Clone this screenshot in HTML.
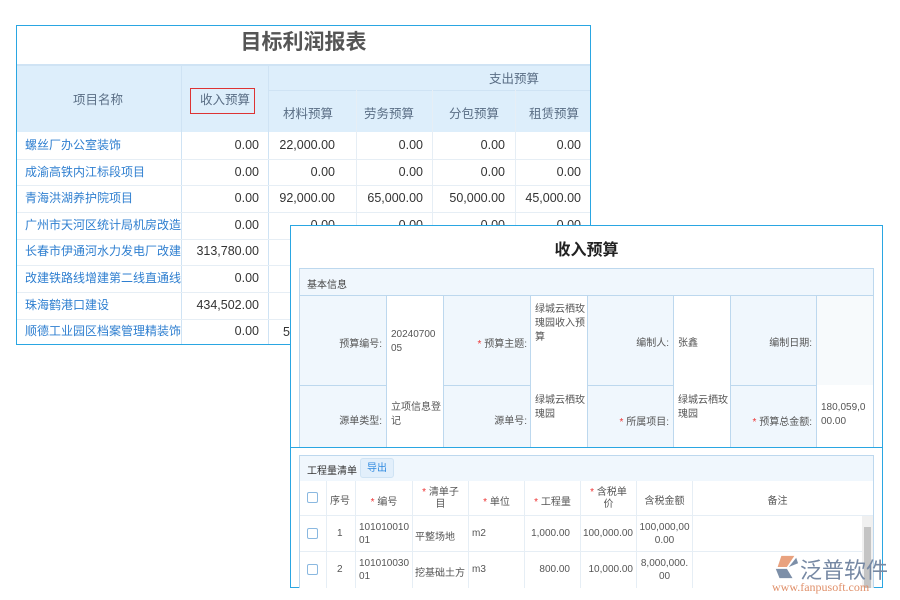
<!DOCTYPE html>
<html><head><meta charset="utf-8"><style>
*{margin:0;padding:0;box-sizing:border-box}
body{width:900px;height:600px;background:#fff;position:relative;overflow:hidden;font-family:"Liberation Sans","Noto Sans CJK SC",sans-serif}
.a{position:absolute}
.t{position:absolute;white-space:nowrap}
.lp{left:16px;top:25px;width:575px;height:320px;border:1px solid #2aa6e2;background:#fff}
.hl{position:absolute;height:1px;background:#e6eef5}
.vl{position:absolute;width:1px;background:#e6eef5}
.lk{color:#2f7fd0;font-size:12px;white-space:nowrap;height:26.6px}
.num{color:#333;font-size:12.5px;text-align:right;white-space:nowrap}
.hd{color:#5a6e85;font-size:12.5px}
.rp{left:290px;top:225px;width:593px;height:363px;border:1px solid #2aa6e2;background:#fff}
.s{font-size:10px;color:#555}
.r{color:#e33}
.bl{position:absolute;background:#bdd8ee}
</style></head><body>
<div class="a lp"></div>
<div class="t" style="left:16px;top:26px;width:575px;text-align:center;font-size:21px;font-weight:bold;color:#555">目标利润报表</div>
<div class="a" style="left:17px;top:64px;width:573px;height:68px;background:#ddeefb"></div>
<div class="a" style="left:17px;top:64px;width:573px;height:2px;background:#cfe3f4"></div>
<div class="a" style="left:181px;top:64px;width:1px;height:280px;background:#cfe3f4"></div>
<div class="a" style="left:268px;top:64px;width:1px;height:280px;background:#cfe3f4"></div>
<div class="a" style="left:268px;top:90px;width:322px;height:1px;background:#cfe3f4"></div>
<div class="a" style="left:356px;top:90px;width:1px;height:254px;background:#e6eef5"></div>
<div class="a" style="left:432px;top:90px;width:1px;height:254px;background:#e6eef5"></div>
<div class="a" style="left:515px;top:90px;width:1px;height:254px;background:#e6eef5"></div>
<div class="t hd" style="left:73px;top:89px">项目名称</div>
<div class="a" style="left:190px;top:88px;width:65px;height:26px;border:1px solid #d33"></div>
<div class="t hd" style="left:200px;top:89px">收入预算</div>
<div class="t hd" style="left:489px;top:68px">支出预算</div>
<div class="t hd" style="left:283px;top:103px">材料预算</div>
<div class="t hd" style="left:364px;top:103px">劳务预算</div>
<div class="t hd" style="left:449px;top:103px">分包预算</div>
<div class="t hd" style="left:529px;top:103px">租赁预算</div>
<div class="hl" style="left:17px;top:159px;width:573px"></div>
<div class="hl" style="left:17px;top:185px;width:573px"></div>
<div class="hl" style="left:17px;top:212px;width:573px"></div>
<div class="hl" style="left:17px;top:239px;width:573px"></div>
<div class="hl" style="left:17px;top:265px;width:573px"></div>
<div class="hl" style="left:17px;top:292px;width:573px"></div>
<div class="hl" style="left:17px;top:319px;width:573px"></div>
<div class="a" style="left:25px;top:132px;width:156px;height:212px;overflow:hidden;line-height:26.6px">
<div class="lk">螺丝厂办公室装饰</div><div class="lk">成渝高铁内江标段项目</div><div class="lk">青海洪湖养护院项目</div><div class="lk">广州市天河区统计局机房改造</div><div class="lk">长春市伊通河水力发电厂改建</div><div class="lk">改建铁路线增建第二线直通线</div><div class="lk">珠海鹤港口建设</div><div class="lk">顺德工业园区档案管理精装饰</div></div>
<div class="a num" style="left:182px;top:132px;width:77px;line-height:26.6px">0.00<br>0.00<br>0.00<br>0.00<br>313,780.00<br>0.00<br>434,502.00<br>0.00</div>
<div class="a num" style="left:269px;top:132px;width:66px;line-height:26.6px">22,000.00<br>0.00<br>92,000.00<br>0.00<br>28</div>
<div class="a num" style="left:357px;top:132px;width:66px;line-height:26.6px">0.00<br>0.00<br>65,000.00<br>0.00</div>
<div class="a num" style="left:433px;top:132px;width:72px;line-height:26.6px">0.00<br>0.00<br>50,000.00<br>0.00</div>
<div class="a num" style="left:516px;top:132px;width:65px;line-height:26.6px">0.00<br>0.00<br>45,000.00<br>0.00</div>
<div class="a" style="left:283px;top:325px;font-size:12.5px;color:#333">5</div>

<div class="a rp"></div>
<div class="t" style="left:290px;top:236px;width:593px;text-align:center;font-size:16px;font-weight:bold;color:#222">收入预算</div>
<div class="a" style="left:299px;top:268px;width:575px;height:180px;background:#f0f7fd;border:1px solid #bdd8ee"></div>
<div class="t s" style="left:307px;top:276px;color:#444">基本信息</div>
<div class="bl" style="left:299px;top:295px;width:575px;height:1px"></div>
<div class="bl" style="left:299px;top:385px;width:575px;height:1px"></div>
<div class="a" style="left:387px;top:296px;width:56px;height:151px;background:#fff"></div>
<div class="a" style="left:531px;top:296px;width:56px;height:151px;background:#fff"></div>
<div class="a" style="left:674px;top:296px;width:56px;height:151px;background:#fff"></div>
<div class="a" style="left:817px;top:296px;width:56px;height:151px;background:#fff"></div>
<div class="a" style="left:817px;top:296px;width:56px;height:89px;background:#f7fafc"></div>
<div class="bl" style="left:386px;top:295px;width:1px;height:152px"></div>
<div class="bl" style="left:443px;top:295px;width:1px;height:152px"></div>
<div class="bl" style="left:530px;top:295px;width:1px;height:152px"></div>
<div class="bl" style="left:587px;top:295px;width:1px;height:152px"></div>
<div class="bl" style="left:673px;top:295px;width:1px;height:152px"></div>
<div class="bl" style="left:730px;top:295px;width:1px;height:152px"></div>
<div class="bl" style="left:816px;top:295px;width:1px;height:152px"></div>
<div class="t s" style="left:300px;top:335px;width:82px;text-align:right">预算编号:</div>
<div class="a s" style="left:391px;top:328px;line-height:14px">20240700<br>05</div>
<div class="t s" style="left:444px;top:335px;width:83px;text-align:right"><span class="r">*</span> 预算主题:</div>
<div class="a s" style="left:535px;top:303px;line-height:14px">绿城云栖玫<br>瑰园收入预<br>算</div>
<div class="t s" style="left:588px;top:334px;width:81px;text-align:right">编制人:</div>
<div class="t s" style="left:678px;top:334px">张鑫</div>
<div class="t s" style="left:731px;top:334px;width:81px;text-align:right">编制日期:</div>
<div class="t s" style="left:300px;top:412px;width:82px;text-align:right">源单类型:</div>
<div class="a s" style="left:391px;top:401px;line-height:14px">立项信息登<br>记</div>
<div class="t s" style="left:444px;top:412px;width:83px;text-align:right">源单号:</div>
<div class="a s" style="left:535px;top:394px;line-height:14px">绿城云栖玫<br>瑰园</div>
<div class="t s" style="left:588px;top:413px;width:81px;text-align:right"><span class="r">*</span> 所属项目:</div>
<div class="a s" style="left:678px;top:394px;line-height:14px">绿城云栖玫<br>瑰园</div>
<div class="t s" style="left:731px;top:413px;width:81px;text-align:right"><span class="r">*</span> 预算总金额:</div>
<div class="a s" style="left:821px;top:401px;line-height:14px">180,059,0<br>00.00</div>
<div class="a" style="left:290px;top:447px;width:593px;height:1px;background:#2aa6e2"></div>

<div class="a" style="left:299px;top:455px;width:575px;height:133px;background:#fff;border:1px solid #bdd8ee;border-bottom:none"></div>
<div class="a" style="left:300px;top:456px;width:573px;height:25px;background:#f0f7fd"></div>
<div class="t s" style="left:307px;top:462px;color:#333">工程量清单</div>
<div class="a" style="left:360px;top:458px;width:34px;height:20px;background:#e2effb;border:1px solid #cfe3f4;border-radius:3px;font-size:10px;color:#2f8ae0;text-align:center;line-height:20px">导出</div>
<div class="hl" style="left:300px;top:515px;width:573px"></div>
<div class="hl" style="left:300px;top:551px;width:573px"></div>
<div class="vl" style="left:326px;top:481px;height:107px"></div>
<div class="vl" style="left:355px;top:481px;height:107px"></div>
<div class="vl" style="left:412px;top:481px;height:107px"></div>
<div class="vl" style="left:468px;top:481px;height:107px"></div>
<div class="vl" style="left:524px;top:481px;height:107px"></div>
<div class="vl" style="left:580px;top:481px;height:107px"></div>
<div class="vl" style="left:636px;top:481px;height:107px"></div>
<div class="vl" style="left:692px;top:481px;height:107px"></div>
<div class="a" style="left:307px;top:492px;width:11px;height:11px;border:1px solid #8ab8e0;border-radius:2px"></div>
<div class="a" style="left:307px;top:528px;width:11px;height:11px;border:1px solid #8ab8e0;border-radius:2px"></div>
<div class="a" style="left:307px;top:564px;width:11px;height:11px;border:1px solid #8ab8e0;border-radius:2px"></div>
<div class="t s" style="left:330px;top:492px">序号</div>
<div class="t s" style="left:356px;top:493px;width:56px;text-align:center"><span class="r">*</span> 编号</div>
<div class="a s" style="left:413px;top:487px;width:55px;text-align:center;line-height:12px"><span class="r">*</span> 清单子<br>目</div>
<div class="t s" style="left:469px;top:493px;width:55px;text-align:center"><span class="r">*</span> 单位</div>
<div class="t s" style="left:525px;top:493px;width:55px;text-align:center"><span class="r">*</span> 工程量</div>
<div class="a s" style="left:581px;top:487px;width:55px;text-align:center;line-height:12px"><span class="r">*</span> 含税单<br>价</div>
<div class="t s" style="left:637px;top:492px;width:55px;text-align:center">含税金额</div>
<div class="t s" style="left:693px;top:492px;width:169px;text-align:center">备注</div>
<div class="t s" style="left:337px;top:528px">1</div>
<div class="a s" style="left:359px;top:521px;line-height:13px">101010010<br>01</div>
<div class="t s" style="left:415px;top:528px">平整场地</div>
<div class="t s" style="left:472px;top:528px">m2</div>
<div class="t s" style="left:525px;top:528px;width:45px;text-align:right">1,000.00</div>
<div class="t s" style="left:581px;top:528px;width:52px;text-align:right">100,000.00</div>
<div class="a s" style="left:637px;top:521px;width:55px;text-align:center;line-height:13px">100,000,00<br>0.00</div>
<div class="t s" style="left:337px;top:564px">2</div>
<div class="a s" style="left:359px;top:557px;line-height:13px">101010030<br>01</div>
<div class="t s" style="left:415px;top:564px">挖基础土方</div>
<div class="t s" style="left:472px;top:564px">m3</div>
<div class="t s" style="left:525px;top:564px;width:45px;text-align:right">800.00</div>
<div class="t s" style="left:581px;top:564px;width:52px;text-align:right">10,000.00</div>
<div class="a s" style="left:637px;top:557px;width:55px;text-align:center;line-height:13px">8,000,000.<br>00</div>
<div class="a" style="left:862px;top:516px;width:11px;height:72px;background:#f0f0f0"></div>
<div class="a" style="left:864px;top:527px;width:7px;height:61px;background:#c4c4c4"></div>

<svg class="a" style="left:772px;top:554px" width="28" height="26" viewBox="0 0 30 28">
<path d="M10 2 L24 2 L16 14 L6 14 Z" fill="#e9a27f"/>
<path d="M4 16 L16 16 L22 26 L8 26 Z" fill="#7d8fa8"/>
<path d="M18 14 L26 4 L28 10 Z" fill="#7d8fa8"/>
</svg>
<div class="t" style="left:800px;top:553px;font-size:22px;color:#7688a3">泛普软件</div>
<div class="t" style="left:772px;top:580px;font-size:12px;color:#e0906a;font-family:'Liberation Serif',serif">www.fanpusoft.com</div>
</body></html>
